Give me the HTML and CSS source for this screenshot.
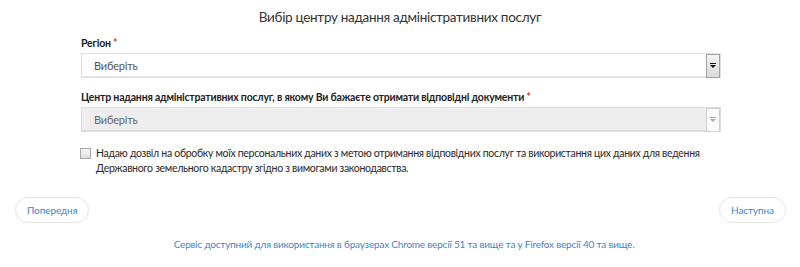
FILE: index.html
```html
<!DOCTYPE html>
<html lang="uk">
<head>
<meta charset="utf-8">
<link rel="stylesheet" href="styles.css">
</head>
<body>
<div class="page">
  <h1 class="title">Вибір центру надання адміністративних послуг</h1>
  <form class="form">
    <div class="field">
      <label class="label">Регіон <span class="req">*</span></label>
      <div class="select">
        <span class="select-text">Виберіть</span>
        <span class="arrow"><span class="tri"></span></span>
      </div>
    </div>
    <div class="field">
      <label class="label">Центр надання адміністративних послуг, в якому Ви бажаєте отримати відповідні документи <span class="req">*</span></label>
      <div class="select disabled">
        <span class="select-text">Виберіть</span>
        <span class="arrow"><span class="tri"></span></span>
      </div>
    </div>
    <label class="consent">
      <span class="box"></span>
      <span class="consent-text">Надаю дозвіл на обробку моїх персональних даних з метою отримання відповідних послуг та використання цих даних для ведення Державного земельного кадастру згідно з вимогами законодавства.</span>
    </label>
  </form>
  <div class="nav">
    <span class="btn">Попередня</span>
    <span class="btn">Наступна</span>
  </div>
  <p class="footer">Сервіс доступний для використання в браузерах Chrome версії 51 та вище та у Firefox версії 40 та вище.</p>
</div>
</body>
</html>
```

FILE: styles.css
```css
* { box-sizing: border-box; }
html, body { margin: 0; padding: 0; background: #fff; }
body {
  font-family: Lato, "Open Sans", sans-serif;
  color: #333;
  width: 800px;
  height: 267px;
  overflow: hidden;
}
.title {
  margin: 0;
  padding-top: 7px;
  height: 36px;
  font-size: 13.5px;
  letter-spacing: -0.3px;
  font-weight: 400;
  text-align: center;
  line-height: 20px;
  color: #333;
}
.form {
  width: 640px;
  margin-left: 81px;
}
.field { display: flex; flex-direction: column; }
.label {
  font-size: 10.5px;
  letter-spacing: -0.2px;
  font-weight: 700;
  line-height: 14px;
  height: 17px;
  color: #222;
}
.req { color: #d9342b; }
.select {
  height: 25px;
  border: 1px solid #e0e0e0;
  border-bottom: 2px solid #e4e4e4;
  display: flex;
  align-items: center;
  justify-content: space-between;
  background: #fff;
  margin-bottom: 12px;
}
.select-text {
  font-size: 11px;
  letter-spacing: -0.2px;
  color: #555;
  padding-left: 12px;
}
.arrow {
  width: 14px;
  height: 24px;
  margin-top: 1px;
  border: 1px solid #a0a0a0;
  background: linear-gradient(#f4f4f4, #dadada);
  display: flex;
  align-items: center;
  justify-content: center;
}
.tri {
  width: 0;
  height: 0;
  border-left: 3px solid transparent;
  border-right: 3px solid transparent;
  border-top: 3px solid #111;
  margin-top: 2px;
  position: relative;
}
.tri::before {
  content: "";
  position: absolute;
  left: -3px;
  top: -5px;
  width: 6px;
  height: 1px;
  background: #111;
}
.disabled { background: #eee; border-color: #ddd; }
.disabled .select-text { color: #666; }
.disabled .arrow { border-color: #cfcfcf; background: #fafafa; }
.disabled .tri { border-top-color: #aaa; }
.disabled .tri::before { background: #aaa; }
.consent {
  display: flex;
  align-items: flex-start;
  gap: 5px;
  margin-top: 2px;
  margin-left: -1px;
}
.box {
  flex: none;
  width: 11px;
  height: 11px;
  margin-top: 2px;
  border: 1px solid #aaa;
  background: linear-gradient(#f6f6f6, #dedede);
}
.consent-text {
  font-size: 10.5px;
  letter-spacing: -0.3px;
  line-height: 15px;
  color: #2a2a2a;
}
.nav {
  display: flex;
  justify-content: space-between;
  padding: 0 14px 0 15px;
  margin-top: 21px;
}
.btn {
  height: 26px;
  padding: 0 11px;
  border: 1px solid #e6e6e6;
  border-radius: 13px;
  font-size: 10px;
  letter-spacing: -0.1px;
  color: #3d87c7;
  display: flex;
  align-items: center;
}
.footer {
  margin: 15px 0 0;
  padding-left: 8px;
  text-align: center;
  font-size: 10px;
  letter-spacing: -0.2px;
  color: #3d87c7;
}
```
